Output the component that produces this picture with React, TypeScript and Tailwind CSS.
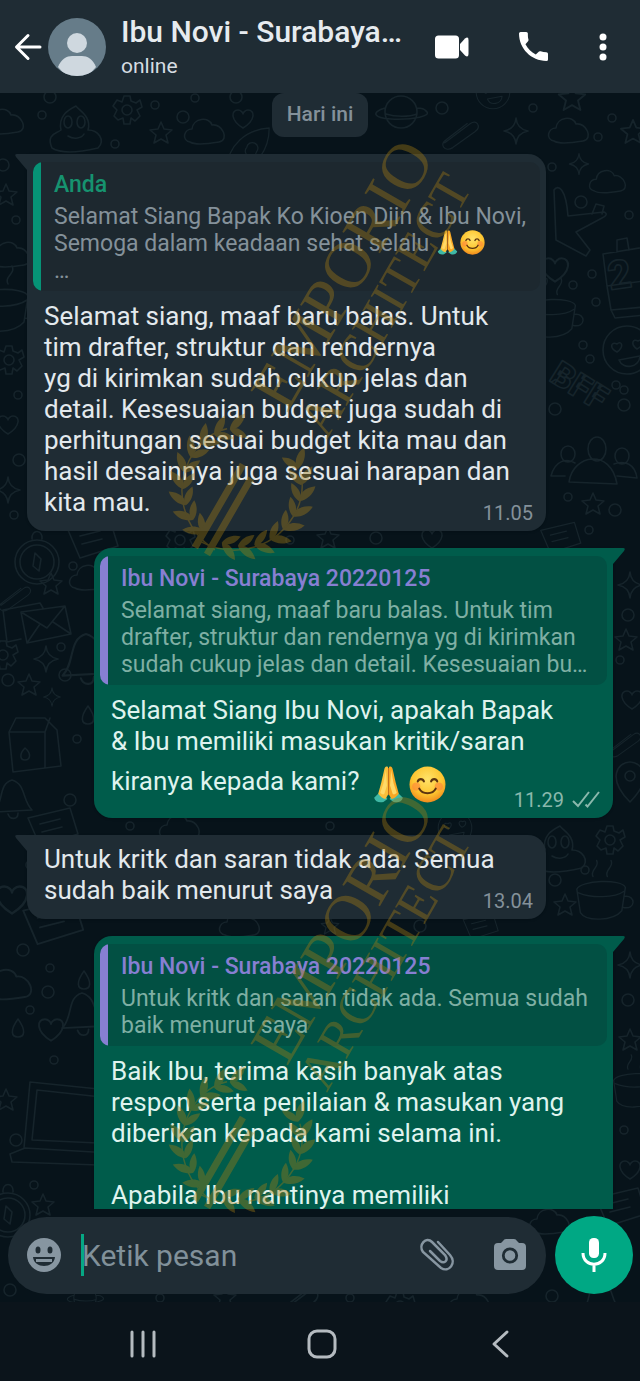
import React from 'react';

type Message = {
  id: number;
  out?: boolean;
  quote?: { name: string; lines: string[]; emoji?: boolean; more?: boolean };
  lines: string[];
  emoji?: boolean;
  time?: string;
};

const messages: Message[] = [
  {
    id: 1,
    quote: {
      name: 'Anda',
      lines: ['Selamat Siang Bapak Ko Kioen Djin & Ibu Novi,', 'Semoga dalam keadaan sehat selalu '],
      emoji: true,
      more: true,
    },
    lines: [
      'Selamat siang, maaf baru balas. Untuk',
      'tim drafter, struktur dan rendernya',
      'yg di kirimkan sudah cukup jelas dan',
      'detail. Kesesuaian budget juga sudah di',
      'perhitungan sesuai budget kita mau dan',
      'hasil desainnya juga sesuai harapan dan',
      'kita mau.',
    ],
    time: '11.05',
  },
  {
    id: 2,
    out: true,
    quote: {
      name: 'Ibu Novi - Surabaya 20220125',
      lines: [
        'Selamat siang, maaf baru balas. Untuk tim',
        'drafter, struktur dan rendernya yg di kirimkan',
        'sudah cukup jelas dan detail. Kesesuaian bu…',
      ],
    },
    lines: ['Selamat Siang Ibu Novi, apakah Bapak', '& Ibu memiliki masukan kritik/saran', 'kiranya kepada kami? '],
    emoji: true,
    time: '11.29',
  },
  {
    id: 3,
    lines: ['Untuk kritk dan saran tidak ada. Semua', 'sudah baik menurut saya'],
    time: '13.04',
  },
  {
    id: 4,
    out: true,
    quote: {
      name: 'Ibu Novi - Surabaya 20220125',
      lines: ['Untuk kritk dan saran tidak ada. Semua sudah', 'baik menurut saya'],
    },
    lines: [
      'Baik Ibu, terima kasih banyak atas',
      'respon serta penilaian & masukan yang',
      'diberikan kepada kami selama ini.',
      '',
      'Apabila Ibu nantinya memiliki',
      '',
    ],
  },
];

/* Wallpaper doodles, each drawn around its own origin */
const doodles: Record<string, string> = {
  star: 'M0-11 3-4 11-3 5 2 7 10 0 6-7 10-5 2-11-3-3-4z',
  spark: 'M0-13Q1-2 12 0 1 2 0 13-1 2-12 0-1-2 0-13z',
  heart: 'M0 9C-13 1-12-9-5-9-2-9 0-6 0-5 0-6 2-9 5-9 12-9 13 1 0 9z',
  cloud: 'M-15 10C-24 8-21-3-13-3-12-14 4-16 7-7 17-9 25 8 14 10-4 13-12 12-15 10z',
  dot: 'M4 0A4 4 0 1 1-4 0 4 4 0 1 1 4 0z',
  ring: 'M6 0A6 6 0 1 1-6 0 6 6 0 1 1 6 0z',
  drop: 'M0-9C8 2 7 9 0 9-7 9-8 2 0-9z',
  planet: 'M16 0A16 16 0 1 1-16 0 16 16 0 1 1 16 0zM-16-4C-30 0-28 6-10 7 12 8 32 4 25-1 23-4 16-4 16-4M-15 2C-6 5 8 5 16 2',
  gear: 'M-3-14H3L4-9 9-7 13-10 15-3 10 0 13 6 8 11 4 8 3 14H-3L-4 8-9 10-13 6-10 0-14-4-10-10-5-8zM5 0A5 5 0 1 1-5 0 5 5 0 1 1 5 0z',
  mail: 'M-24-14 20-20 26 8-18 17zM-24-14 2 2 20-20M-18 17-5-2M26 8 8-4M-24 13-38 16-42-16-5-23-2-18',
  compass: 'M22 0A22 22 0 1 1-22 0 22 22 0 1 1 22 0zM17 0A17 17 0 1 1-17 0 17 17 0 1 1 17 0zM-4 4-2-9 4-3 2 9zM-5-23C-6-33 6-33 5-23',
  carton: 'M-24-14-17-28H12L24-16 28 20-20 26zM-24-14H12V22M12-14 17-28M-8 2C-1 8-3 14-8 14-13 14-14 8-8 2z',
  laptop: 'M-40-38 58-28V34L-46 28zM-33-30 50-21V24L-38 20zM-60 34-45 28 58 34V46L-58 42z',
  people: 'M9-19A9 12 0 1 1-9-19 9 12 0 1 1 9-19zM-28 14C-24-14 14-20 20 16zM-22-14A7 8 0 1 1-36-14 7 8 0 1 1-22-14zM-32 8H-46C-42-8-30-10-22-5M32-12A7 8 0 1 1 18-12 7 8 0 1 1 32-12zM20 8 40 10C38-4 28-8 17-4',
  plane: 'M-12 12-14-38C-10-44-2-40 0-12L36-16C40-14 38-12 34-10L8 4 22 22 18 28-12 12zM24-14 28-24 36-22 34-14',
  calendar: 'M-22-22 26-30 30 30-14 34-18 10zM-18 10-22-22M-18 10 26 4M-8-24V-36L2-38 4-26M-14 34-10 42 30 38',
  face: 'M24 0A24 24 0 1 1-24 0 24 24 0 1 1 24 0zM-10 2C-18-2-16-9-10-6-6-10-2-4-10 2zM10-1C3-6 6-12 11-9 16-12 18-5 10-1zM-8 10 13 6C12 18-4 20-8 10z',
  cup: 'M-28-12C-24-22 22-24 26-14L22 12C12 24-18 24-24 14zM-26-8C-12-2 14-2 25-10M25-4C38-6 38 12 23 8M-10-26C-14-34-2-36-6-44M6-26C2-34 14-36 10-44',
  rocket: 'M-30 24C-28-10-4-28 24-30 24-2 8 18-18 28zM-4-6A7 7 0 1 1 8 0 7 7 0 1 1-4-6zM-30 24-38 34M-18 28-22 40',
  note: 'M-24-12 18-22 26 4-12 16zM-12-6 8-11M-10 2 10-3',
  chick: 'M-24 18C-30 4-20 4-15 0-18-14-8-20 0-24 2-20 16-14 12 0 22 0 30 10 22 18-4 24-18 22-24 18zM-4-8A4 6 0 1 1-12-8 4 6 0 1 1-4-8zM9-8A4 6 0 1 1 1-8 4 6 0 1 1 9-8zM-8 6C-2 10 6 8 8 4',
  bell: 'M-18 12C-8 2-14-16 0-20 14-16 10 0 20 10zM-4 14C-2 20 6 20 6 13',
  clip: 'M-24 16 8-8C16-14 22-4 14 2L-14 22C-24 28-32 18-22 12L4-8',
  pin: 'M0 22C-24-2-12-18 0-18 12-18 24-2 0 22zM5-4A5 5 0 1 1-5-4 5 5 0 1 1 5-4z',
};

const placed: [string, number, number, number?][] = [
  ['cloud', 4, 122], ['chick', 76, 130], ['gear', 127, 110], ['star', 161, 133], ['cloud', 205, 132], ['heart', 243, 119],
  ['dot', 155, 105], ['dot', 195, 98], ['ring', 183, 117], ['dot', 42, 115], ['ring', 50, 97], ['ring', 236, 97], ['dot', 115, 144],
  ['planet', 401, 112], ['ring', 442, 108], ['face', 493, 92, 0.7], ['clip', 464, 130, 0.8], ['spark', 516, 131], ['cloud', 569, 131],
  ['star', 572, 98, 1.2], ['star', 633, 132, 1.1], ['dot', 598, 137], ['dot', 612, 118], ['dot', 533, 108], ['rocket', 250, 152, 0.8],
  ['spark', 579, 164, 0.8], ['cloud', 608, 182, 0.9], ['dot', 552, 167], ['plane', 568, 228], ['ring', 581, 202], ['dot', 629, 215],
  ['cup', 552, 318, 0.9], ['calendar', 625, 276], ['heart', 555, 270, 1.3], ['dot', 573, 285], ['dot', 592, 274], ['dot', 596, 302],
  ['dot', 583, 345], ['face', 627, 350], ['dot', 590, 359], ['ring', 555, 409], ['dot', 616, 385], ['dot', 624, 390], ['ring', 624, 405],
  ['people', 597, 468], ['star', 593, 504], ['dot', 568, 497], ['ring', 615, 510], ['note', 560, 540, 0.8], ['dot', 589, 530],
  ['star', 6, 195], ['ring', 3, 165], ['cloud', 10, 255], ['cup', 2, 310], ['dot', 16, 220], ['gear', 9, 360], ['dot', 18, 395],
  ['heart', 8, 425], ['ring', 19, 460], ['spark', 8, 490], ['dot', 14, 515],
  ['compass', 37, 562], ['clip', 18, 594, 0.7], ['star', 51, 584], ['dot', 73, 566], ['cloud', 90, 578], ['note', 92, 542],
  ['mail', 45, 626], ['dot', 61, 647], ['gear', 3, 655], ['spark', 46, 659], ['ring', 65, 675], ['star', 29, 685], ['ring', 8, 680],
  ['spark', 52, 697, 0.7], ['bell', 86, 660, 1.3], ['drop', 88, 715], ['carton', 33, 746], ['dot', 77, 739], ['ring', 70, 800], ['dot', 130, 826],
  ['bell', 12, 800], ['note', 52, 830], ['spark', 630, 585], ['ring', 628, 615], ['dot', 620, 660], ['heart', 632, 700],
  ['clip', 628, 740, 0.7], ['pin', 630, 780], ['star', 626, 640], ['cloud', 180, 828], ['face', 455, 828, 0.7], ['dot', 330, 826],
  ['chick', 560, 850], ['gear', 610, 840], ['dot', 585, 870], ['cup', 602, 900, 0.9], ['star', 565, 905], ['ring', 555, 880],
  ['note', 52, 925, 1.2], ['heart', 12, 900, 1.5], ['ring', 23, 950], ['dot', 30, 865], ['dot', 50, 968], ['cloud', 8, 985, 1.2],
  ['ring', 48, 992], ['dot', 30, 1010], ['drop', 18, 1028], ['heart', 51, 1030, 1.2], ['dot', 54, 1060], ['drop', 84, 980], ['bell', 82, 1015, 1.1],
  ['laptop', 70, 1120], ['star', 6, 1100], ['ring', 16, 1140], ['dot', 34, 1185], ['star', 43, 1205], ['compass', 8, 1215],
  ['cloud', 240, 925], ['star', 330, 926, 0.8], ['ring', 420, 926], ['note', 480, 928, 0.7], ['dot', 290, 540], ['star', 328, 538],
  ['ring', 376, 538], ['heart', 432, 539], ['gear', 180, 540], ['spark', 630, 965], ['ring', 628, 1000], ['star', 630, 1040],
  ['cup', 636, 1090, 0.8], ['dot', 624, 1130], ['heart', 630, 1170], ['note', 620, 1210], ['cloud', 550, 1222], ['ring', 10, 1290],
  ['planet', 85, 1298, 0.7], ['dot', 160, 1298], ['star', 225, 1298], ['clip', 300, 1300], ['dot', 350, 1298], ['gear', 400, 1306],
  ['cloud', 470, 1302], ['ring', 552, 1296], ['bell', 600, 1300],
];

const Wallpaper: React.FC = () => (
  <svg className="absolute inset-0 h-full w-full" aria-hidden="true">
    <g transform="translate(0 -93)" fill="none" stroke="#16242b" strokeWidth="1.6" strokeLinejoin="round" strokeLinecap="round">
      {placed.map(([kind, x, y, scale = 1], i) => (
        <path key={i} d={doodles[kind]} transform={`translate(${x} ${y}) scale(${scale})`} />
      ))}
      <text x="548" y="380" transform="rotate(32 548 380)" fontSize="34" className="font-['Roboto',sans-serif] font-black">
        BFF
      </text>
      <text x="610" y="290" transform="rotate(-8 610 290)" fontSize="40" className="font-['Roboto',sans-serif] font-black">
        2
      </text>
    </g>
  </svg>
);

/* Laurel wreath: two branches growing up from the bottom of a circle */
const leaf = 'M0 0C4-6 13-7 22-1 15 4 6 4 0 0z';
const branch = Array.from({ length: 9 }, (_, i) => 80 - i * 16);

const Laurel: React.FC = () => (
  <g transform="translate(242 487) rotate(30)">
    {[1, -1].map((side) => (
      <g key={side} transform={`scale(${side} 1)`}>
        {branch.map((deg) => {
          const rad = (deg * Math.PI) / 180;
          const x = 59 * Math.cos(rad);
          const y = 59 * Math.sin(rad);
          return (
            <g key={deg} transform={`translate(${x} ${y}) rotate(${deg - 90})`}>
              <path d={leaf} transform="rotate(36)" />
              <path d={leaf} transform="rotate(-40) scale(.9 -.9)" />
            </g>
          );
        })}
        <path d="M-8 68C30 66 62 36 59-8 57-26 48-38 42-43" fill="none" stroke="currentColor" strokeWidth="1.5" />
      </g>
    ))}
    <path d="M-14-20H-7V76H-14zM0-12H7V76H0z" />
  </g>
);

const Watermark: React.FC<{ className: string }> = ({ className }) => (
  <svg
    viewBox="0 0 640 570"
    className={`pointer-events-none absolute left-0 h-[570px] w-[640px] text-[#a17a14] opacity-40 ${className}`}
    fill="currentColor"
    aria-hidden="true"
  >
    <Laurel />
    <g className="font-['Liberation_Serif',serif]">
      <text transform="translate(287 414) rotate(-60)" fontSize="66">EMPORIO</text>
      <text transform="translate(327 440) rotate(-60)" fontSize="52">ARCHITECT</text>
    </g>
  </svg>
);

const Pray: React.FC<{ className: string }> = ({ className }) => (
  <svg viewBox="0 0 36 36" className={className} role="img" aria-label="terima kasih">
    <path fill="#3fb8a5" d="M9 26 4 31c1 4 5 5 9 4l4-3-5-7zM27 26l5 5c-1 4-5 5-9 4l-4-3 5-7z" />
    <path fill="#fbbf3b" d="M17.500 1c-2-1-3 0-3.500 2l-3 13-3 11c2 3 5 5 7 5l2.500-4z" />
    <path fill="#f9a825" d="M18.500 1c2-1 3 0 3.500 2l3 13 3 11c-2 3-5 5-7 5l-2.500-4z" />
    <path fill="#ffd968" d="M15.500 4 13 17l-3 9c2 2 3 2 4 1l2.500-8zM20.500 4 23 17l3 9c-2 2-3 2-4 1l-2.500-8z" />
    <path stroke="#c8701c" strokeWidth="1" d="M18 2v26" />
  </svg>
);

const Smile: React.FC<{ className: string }> = ({ className }) => (
  <svg viewBox="0 0 36 36" className={className} role="img" aria-label="senyum">
    <defs>
      <radialGradient id="face" cx="50%" cy="35%" r="65%">
        <stop offset="0" stopColor="#ffe36a" />
        <stop offset=".65" stopColor="#fdc52f" />
        <stop offset="1" stopColor="#f08a1d" />
      </radialGradient>
    </defs>
    <circle cx="18" cy="18" r="17.500" fill="url(#face)" />
    <circle cx="7" cy="20" r="4" fill="#ff7b3a" opacity=".55" />
    <circle cx="29" cy="20" r="4" fill="#ff7b3a" opacity=".55" />
    <g fill="none" stroke="#5b3410" strokeWidth="2" strokeLinecap="round">
      <path d="M8.500 15c1-3 5-3 6 0M21.500 15c1-3 5-3 6 0M10 22c3 6 13 6 16 0" />
    </g>
  </svg>
);

const Bubble: React.FC<{ message: Message }> = ({ message }) => {
  const { out, quote, lines, emoji, time } = message;
  return (
    <article
      className={`relative w-[calc(100%-121px)] shrink-0 rounded-[18px] px-1.5 shadow-sm ${
        out ? 'mr-[27px] self-end rounded-tr-none bg-[#005c4b]' : 'ml-[27px] self-start rounded-tl-none bg-[#1f2c34]'
      } ${quote ? 'pt-2' : 'pt-[9px]'} pb-[13px]`}
    >
      <svg
        viewBox="0 0 14 18"
        className={`absolute top-0 h-[18px] w-[14px] ${out ? '-right-[12px] text-[#005c4b]' : '-left-[12px] -scale-x-100 text-[#1f2c34]'}`}
        fill="currentColor"
        aria-hidden="true"
      >
        <path d="M0 0H12Q15 0 13 3L2 16V18H0z" />
      </svg>

      {quote && (
        <blockquote className={`mb-[10px] flex overflow-hidden rounded-[10px] ${out ? 'bg-[#025043]' : 'bg-[#1d282f]'}`}>
          <div className={`w-2 shrink-0 ${out ? 'bg-[#877fd2]' : 'bg-[#069376]'}`} />
          <div className="min-w-0 flex-1 pt-[9px] pb-[7px] pl-[13px]">
            <p className={`mb-1 text-[23px] leading-[28px] font-medium ${out ? 'text-[#877fd2]' : 'text-[#16936f]'}`}>{quote.name}</p>
            <p className={`text-[23px] leading-[27px] whitespace-pre ${out ? 'text-[#7fafa4]' : 'text-[#84919a]'}`}>
              {quote.lines.join('\n')}
              {quote.emoji && (
                <>
                  <Pray className="inline-block h-[25px] w-[25px] align-[-4px]" />
                  <Smile className="inline-block h-[25px] w-[25px] align-[-4px]" />
                </>
              )}
              {quote.more && '\n…'}
            </p>
          </div>
        </blockquote>
      )}

      <p className={`px-[11px] text-[26px] leading-[31px] ${out ? 'text-[#dff3ee]' : 'text-[#e3e9ed]'}`}>
        {lines.map((line, i) => (
          <span key={i} className="block min-h-[31px] w-fit whitespace-pre">
            {line}
            {emoji && i === lines.length - 1 && (
              <span className="inline-flex h-[48px] items-end gap-0.5 pb-0.5 pl-1 align-[-13px]">
                <Pray className="h-[37px] w-[37px]" />
                <Smile className="h-[37px] w-[37px]" />
              </span>
            )}
          </span>
        ))}
      </p>

      {time && (
        <div className={`absolute right-[13px] bottom-[6px] flex items-center gap-2 text-[20px] leading-[24px] ${out ? 'text-[#8ab8ac]' : 'text-[#84919a]'}`}>
          <time>{time}</time>
          {out && (
            <svg viewBox="0 0 28 18" className="h-[18px] w-[28px]" fill="none" stroke="currentColor" strokeWidth="2" role="img" aria-label="terkirim">
              <path d="M1 10 6 15 17 1M13.500 13.500 15.500 15.500 27 1" />
            </svg>
          )}
        </div>
      )}
    </article>
  );
};

const Header: React.FC = () => (
  <header className="flex h-[93px] shrink-0 items-center bg-[#1f2c34] pr-[21px] pl-[14px] text-white">
    <button aria-label="Kembali" className="shrink-0">
      <svg viewBox="0 0 28 28" className="h-7 w-7" fill="none" stroke="currentColor" strokeWidth="3" strokeLinecap="round" strokeLinejoin="round">
        <path d="M14 2.500 2.500 14 14 25.500M3 14H26" />
      </svg>
    </button>
    <svg viewBox="0 0 58 58" className="ml-1.5 h-[58px] w-[58px] shrink-0 rounded-full" aria-hidden="true">
      <rect width="58" height="58" fill="#667c89" />
      <circle cx="29" cy="25" r="10" fill="#cfd8df" />
      <path d="M10 49C13 41 19 38 24 38H34C39 38 45 41 48 49L40 58H18z" fill="#cfd8df" />
    </svg>
    <div className="ml-[15px] min-w-0 flex-1">
      <h1 className="truncate text-[30px] leading-[38px] font-medium text-[#e6ebef]">Ibu Novi - Surabaya…</h1>
      <p className="text-[21px] leading-[30px] text-[#d5dde2]">online</p>
    </div>
    <div className="ml-4 flex shrink-0 items-center">
      <button aria-label="Panggilan video">
        <svg viewBox="0 0 36 28" className="h-7 w-9" fill="currentColor">
          <rect x="1" y="2.500" width="24" height="23" rx="3.500" />
          <path d="M26 11 31 5.500Q34.500 3 34.500 7V21Q34.500 25 31 22.500L26 17z" />
        </svg>
      </button>
      <button aria-label="Panggilan suara" className="ml-[49px]">
        <svg viewBox="3 3 18 18" className="h-[29px] w-[29px]" fill="currentColor">
          <path d="M6.540 3H4a1 1 0 0 0-1 1c0 9.390 7.610 17 17 17a1 1 0 0 0 1-1v-3.490a1 1 0 0 0-1-1c-1.240 0-2.450-.2-3.570-.57a1 1 0 0 0-1.020.24l-2 1.800C10.600 15.400 8.600 13.400 7.020 10.600l1.600-1.900a1 1 0 0 0 .25-1.020C8.500 6.560 8.500 5.200 8.500 4a1 1 0 0 0-1-1z" />
        </svg>
      </button>
      <button aria-label="Menu lainnya" className="ml-[39px]">
        <svg viewBox="0 0 32 32" className="h-8 w-8" fill="currentColor">
          <circle cx="16" cy="6" r="3.500" />
          <circle cx="16" cy="16" r="3.500" />
          <circle cx="16" cy="26" r="3.500" />
        </svg>
      </button>
    </div>
  </header>
);

const Composer: React.FC = () => (
  <form className="relative flex shrink-0 items-center gap-[9px] pt-[7px] pr-[7px] pb-2 pl-2">
    <div className="flex h-[77px] min-w-0 flex-1 items-center rounded-full bg-[#1f2c34] pr-[18px] pl-[18px] text-[#8796a1]">
      <button type="button" aria-label="Emoji" className="shrink-0">
        <svg viewBox="0 0 36 36" className="h-9 w-9">
          <circle cx="18" cy="18" r="17" fill="currentColor" />
          <g fill="#1f2c34">
            <ellipse cx="12" cy="13" rx="2.500" ry="3.500" />
            <ellipse cx="24" cy="13" rx="2.500" ry="3.500" />
            <path d="M7 20H29C28 32 8 32 7 20z" />
          </g>
          <path d="M10 22H26V25H10z" fill="currentColor" />
        </svg>
      </button>
      <div className="ml-[19px] h-[42px] w-[3px] shrink-0 bg-[#06a884]" />
      <input
        aria-label="Pesan"
        placeholder="Ketik pesan"
        className="-ml-0.5 h-[50px] min-w-0 flex-1 bg-transparent text-[30px] outline-none placeholder:text-[#81919a]"
      />
      <button type="button" aria-label="Lampirkan" className="mr-[37px] shrink-0">
        <svg viewBox="0 0 36 36" className="h-9 w-9" fill="none" stroke="currentColor" strokeWidth="2.500" strokeLinecap="round">
          <path d="M19 5 31 18C38 26 30 36 22 31L4 15C-1 8 7-1 13 5L26 18C30 24 25 27 21 24L11 14" />
        </svg>
      </button>
      <button type="button" aria-label="Kamera" className="shrink-0">
        <svg viewBox="0 0 36 36" className="h-9 w-9" fill="currentColor">
          <path d="M14 2H22Q24 2 25 4L27 6H30Q34 6 34 10V29Q34 33 30 33H6Q2 33 2 29V10Q2 6 6 6H9L11 4Q12 2 14 2z" />
          <circle cx="18" cy="18.500" r="6.700" fill="none" stroke="#1f2c34" strokeWidth="2.800" />
        </svg>
      </button>
    </div>
    <button type="button" aria-label="Rekam suara" className="flex h-[78px] w-[78px] shrink-0 items-center justify-center rounded-full bg-[#00a884] text-white">
      <svg viewBox="0 0 28 36" className="h-9 w-7" fill="currentColor">
        <rect x="9" y="1" width="10" height="20" rx="4.500" />
        <path d="M3 16C3 31 25 31 25 16M14 27V35" fill="none" stroke="currentColor" strokeWidth="3" />
      </svg>
    </button>
  </form>
);

const NavBar: React.FC = () => (
  <nav className="flex h-[79px] shrink-0 items-center justify-between bg-[#0b141b] pt-1 pr-[124px] pl-[127px] text-[#b5bbc0]">
    <button aria-label="Aplikasi terkini">
      <svg viewBox="0 0 32 32" className="h-8 w-8" stroke="currentColor" strokeWidth="3" strokeLinecap="round">
        <path d="M5 4V28M16 4V28M27 4V28" />
      </svg>
    </button>
    <button aria-label="Beranda">
      <svg viewBox="0 0 32 32" className="h-8 w-8" fill="none" stroke="currentColor" strokeWidth="3">
        <rect x="3" y="3" width="26" height="26" rx="8" />
      </svg>
    </button>
    <button aria-label="Kembali">
      <svg viewBox="-6 0 32 32" className="h-8 w-8" fill="none" stroke="currentColor" strokeWidth="3" strokeLinecap="round" strokeLinejoin="round">
        <path d="M17 4 4 16 17 28" />
      </svg>
    </button>
  </nav>
);

const App: React.FC = () => (
  <div className="relative flex h-screen flex-col overflow-hidden bg-[#07131a] font-[Roboto,sans-serif]">
    <Header />
    <div className="relative flex min-h-0 flex-1 flex-col">
      <Wallpaper />
      <main className="relative flex min-h-0 flex-1 flex-col gap-[17px] overflow-hidden">
        <div className="flex h-11 shrink-0 items-center self-center rounded-[12px] bg-[#1f2c34] px-[15px] text-[21px] font-medium text-[#84919a]">
          Hari ini
        </div>
        {messages.map((message) => (
          <Bubble key={message.id} message={message} />
        ))}
      </main>
      <Composer />
    </div>
    <NavBar />
    <Watermark className="top-0" />
    <Watermark className="top-[653px]" />
  </div>
);

export default App;
